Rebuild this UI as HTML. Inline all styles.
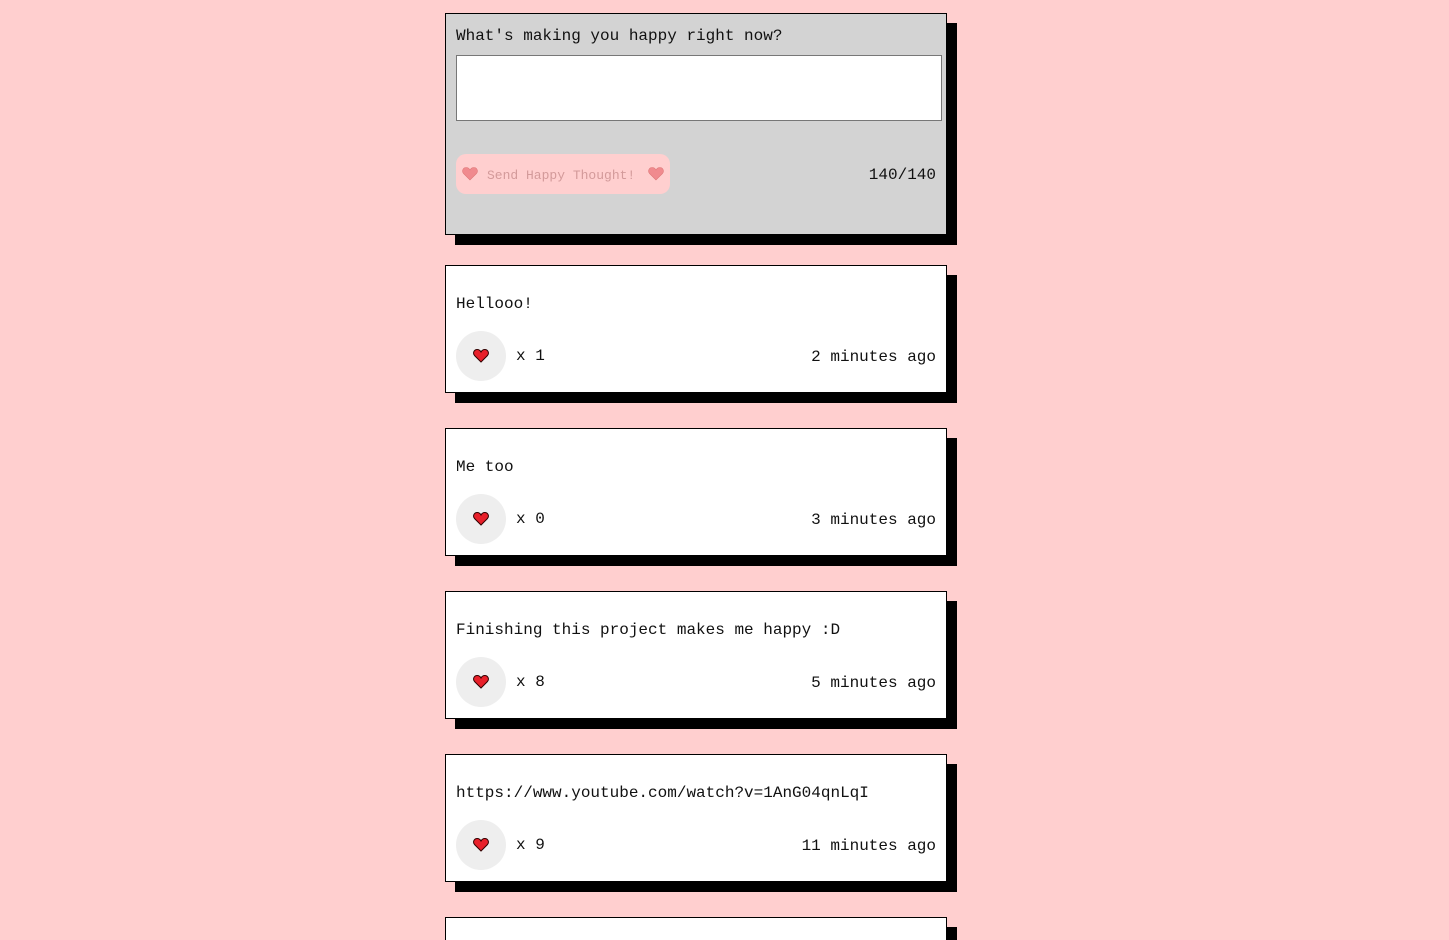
<!DOCTYPE html>
<html style="overflow:hidden;height:940px;"><head><meta charset="utf-8"><style>
body{margin:0;background:#ffcfcf;width:1449px;height:940px;overflow:hidden;position:relative;font-family:"Liberation Mono",monospace;color:#111;}
.card{position:absolute;left:445px;width:500px;border:1px solid #000;background:#fff;box-shadow:10px 10px 0 #000;}
.t{position:absolute;font-size:16px;white-space:pre;line-height:20px;}
.circ{position:absolute;left:10px;width:50px;height:50px;border-radius:50%;background:#eee;}
.circ svg{position:absolute;left:17px;top:18px;}
</style></head><body>
<div class="card" style="top:13px;height:220px;background:#d3d3d3;">
 <div class="t" style="left:10px;top:12px;">What's making you happy right now?</div>
 <div style="position:absolute;left:10px;top:41px;width:484px;height:64px;background:#fff;border:1px solid #777;"></div>
 <div style="position:absolute;left:10px;top:140px;width:214px;height:40px;border-radius:10px;background:#ffcfcf;">
  <svg style="position:absolute;left:6px;top:13px" width="16" height="14" viewBox="0 0 16 14"><path d="M8 13 L1.5 6.5 C-0.5 4 1 0.5 4.2 0.5 C6 0.5 7.2 1.5 8 3 C8.8 1.5 10 0.5 11.8 0.5 C15 0.5 16.5 4 14.5 6.5Z" fill="#f08a8e" stroke="#d77" stroke-width="0.6"/></svg>
  <div class="t" style="left:31px;top:12px;font-size:13px;color:#d39a9a;">Send Happy Thought!</div>
  <svg style="position:absolute;left:192px;top:13px" width="16" height="14" viewBox="0 0 16 14"><path d="M8 13 L1.5 6.5 C-0.5 4 1 0.5 4.2 0.5 C6 0.5 7.2 1.5 8 3 C8.8 1.5 10 0.5 11.8 0.5 C15 0.5 16.5 4 14.5 6.5Z" fill="#f08a8e" stroke="#d77" stroke-width="0.6"/></svg>
 </div>
 <div class="t" style="right:10px;top:151px;">140/140</div>
</div>

<div class="card" style="top:265px;height:126px;">
 <div class="t" style="left:10px;top:28px;">Hellooo!</div>
 <div class="circ" style="top:65px;"><svg width="16" height="14" viewBox="0 0 16 14"><path d="M8 13 L1.5 6.5 C-0.5 4 1 0.5 4.2 0.5 C6 0.5 7.2 1.5 8 3 C8.8 1.5 10 0.5 11.8 0.5 C15 0.5 16.5 4 14.5 6.5Z" fill="#e8202a" stroke="#300" stroke-width="1"/></svg></div>
 <div class="t" style="left:70px;top:80px;">x 1</div>
 <div class="t" style="right:10px;top:81px;">2 minutes ago</div>
</div>

<div class="card" style="top:428px;height:126px;">
 <div class="t" style="left:10px;top:28px;">Me too</div>
 <div class="circ" style="top:65px;"><svg width="16" height="14" viewBox="0 0 16 14"><path d="M8 13 L1.5 6.5 C-0.5 4 1 0.5 4.2 0.5 C6 0.5 7.2 1.5 8 3 C8.8 1.5 10 0.5 11.8 0.5 C15 0.5 16.5 4 14.5 6.5Z" fill="#e8202a" stroke="#300" stroke-width="1"/></svg></div>
 <div class="t" style="left:70px;top:80px;">x 0</div>
 <div class="t" style="right:10px;top:81px;">3 minutes ago</div>
</div>

<div class="card" style="top:591px;height:126px;">
 <div class="t" style="left:10px;top:28px;">Finishing this project makes me happy :D</div>
 <div class="circ" style="top:65px;"><svg width="16" height="14" viewBox="0 0 16 14"><path d="M8 13 L1.5 6.5 C-0.5 4 1 0.5 4.2 0.5 C6 0.5 7.2 1.5 8 3 C8.8 1.5 10 0.5 11.8 0.5 C15 0.5 16.5 4 14.5 6.5Z" fill="#e8202a" stroke="#300" stroke-width="1"/></svg></div>
 <div class="t" style="left:70px;top:80px;">x 8</div>
 <div class="t" style="right:10px;top:81px;">5 minutes ago</div>
</div>

<div class="card" style="top:754px;height:126px;">
 <div class="t" style="left:10px;top:28px;">https://www.youtube.com/watch?v=1AnG04qnLqI</div>
 <div class="circ" style="top:65px;"><svg width="16" height="14" viewBox="0 0 16 14"><path d="M8 13 L1.5 6.5 C-0.5 4 1 0.5 4.2 0.5 C6 0.5 7.2 1.5 8 3 C8.8 1.5 10 0.5 11.8 0.5 C15 0.5 16.5 4 14.5 6.5Z" fill="#e8202a" stroke="#300" stroke-width="1"/></svg></div>
 <div class="t" style="left:70px;top:80px;">x 9</div>
 <div class="t" style="right:10px;top:81px;">11 minutes ago</div>
</div>

<div style="position:absolute;left:455px;top:927px;width:502px;height:13px;background:#000;"></div>
<div style="position:absolute;left:445px;top:917px;width:500px;height:23px;border:1px solid #000;border-bottom:none;background:#fff;"></div>
</body></html>
